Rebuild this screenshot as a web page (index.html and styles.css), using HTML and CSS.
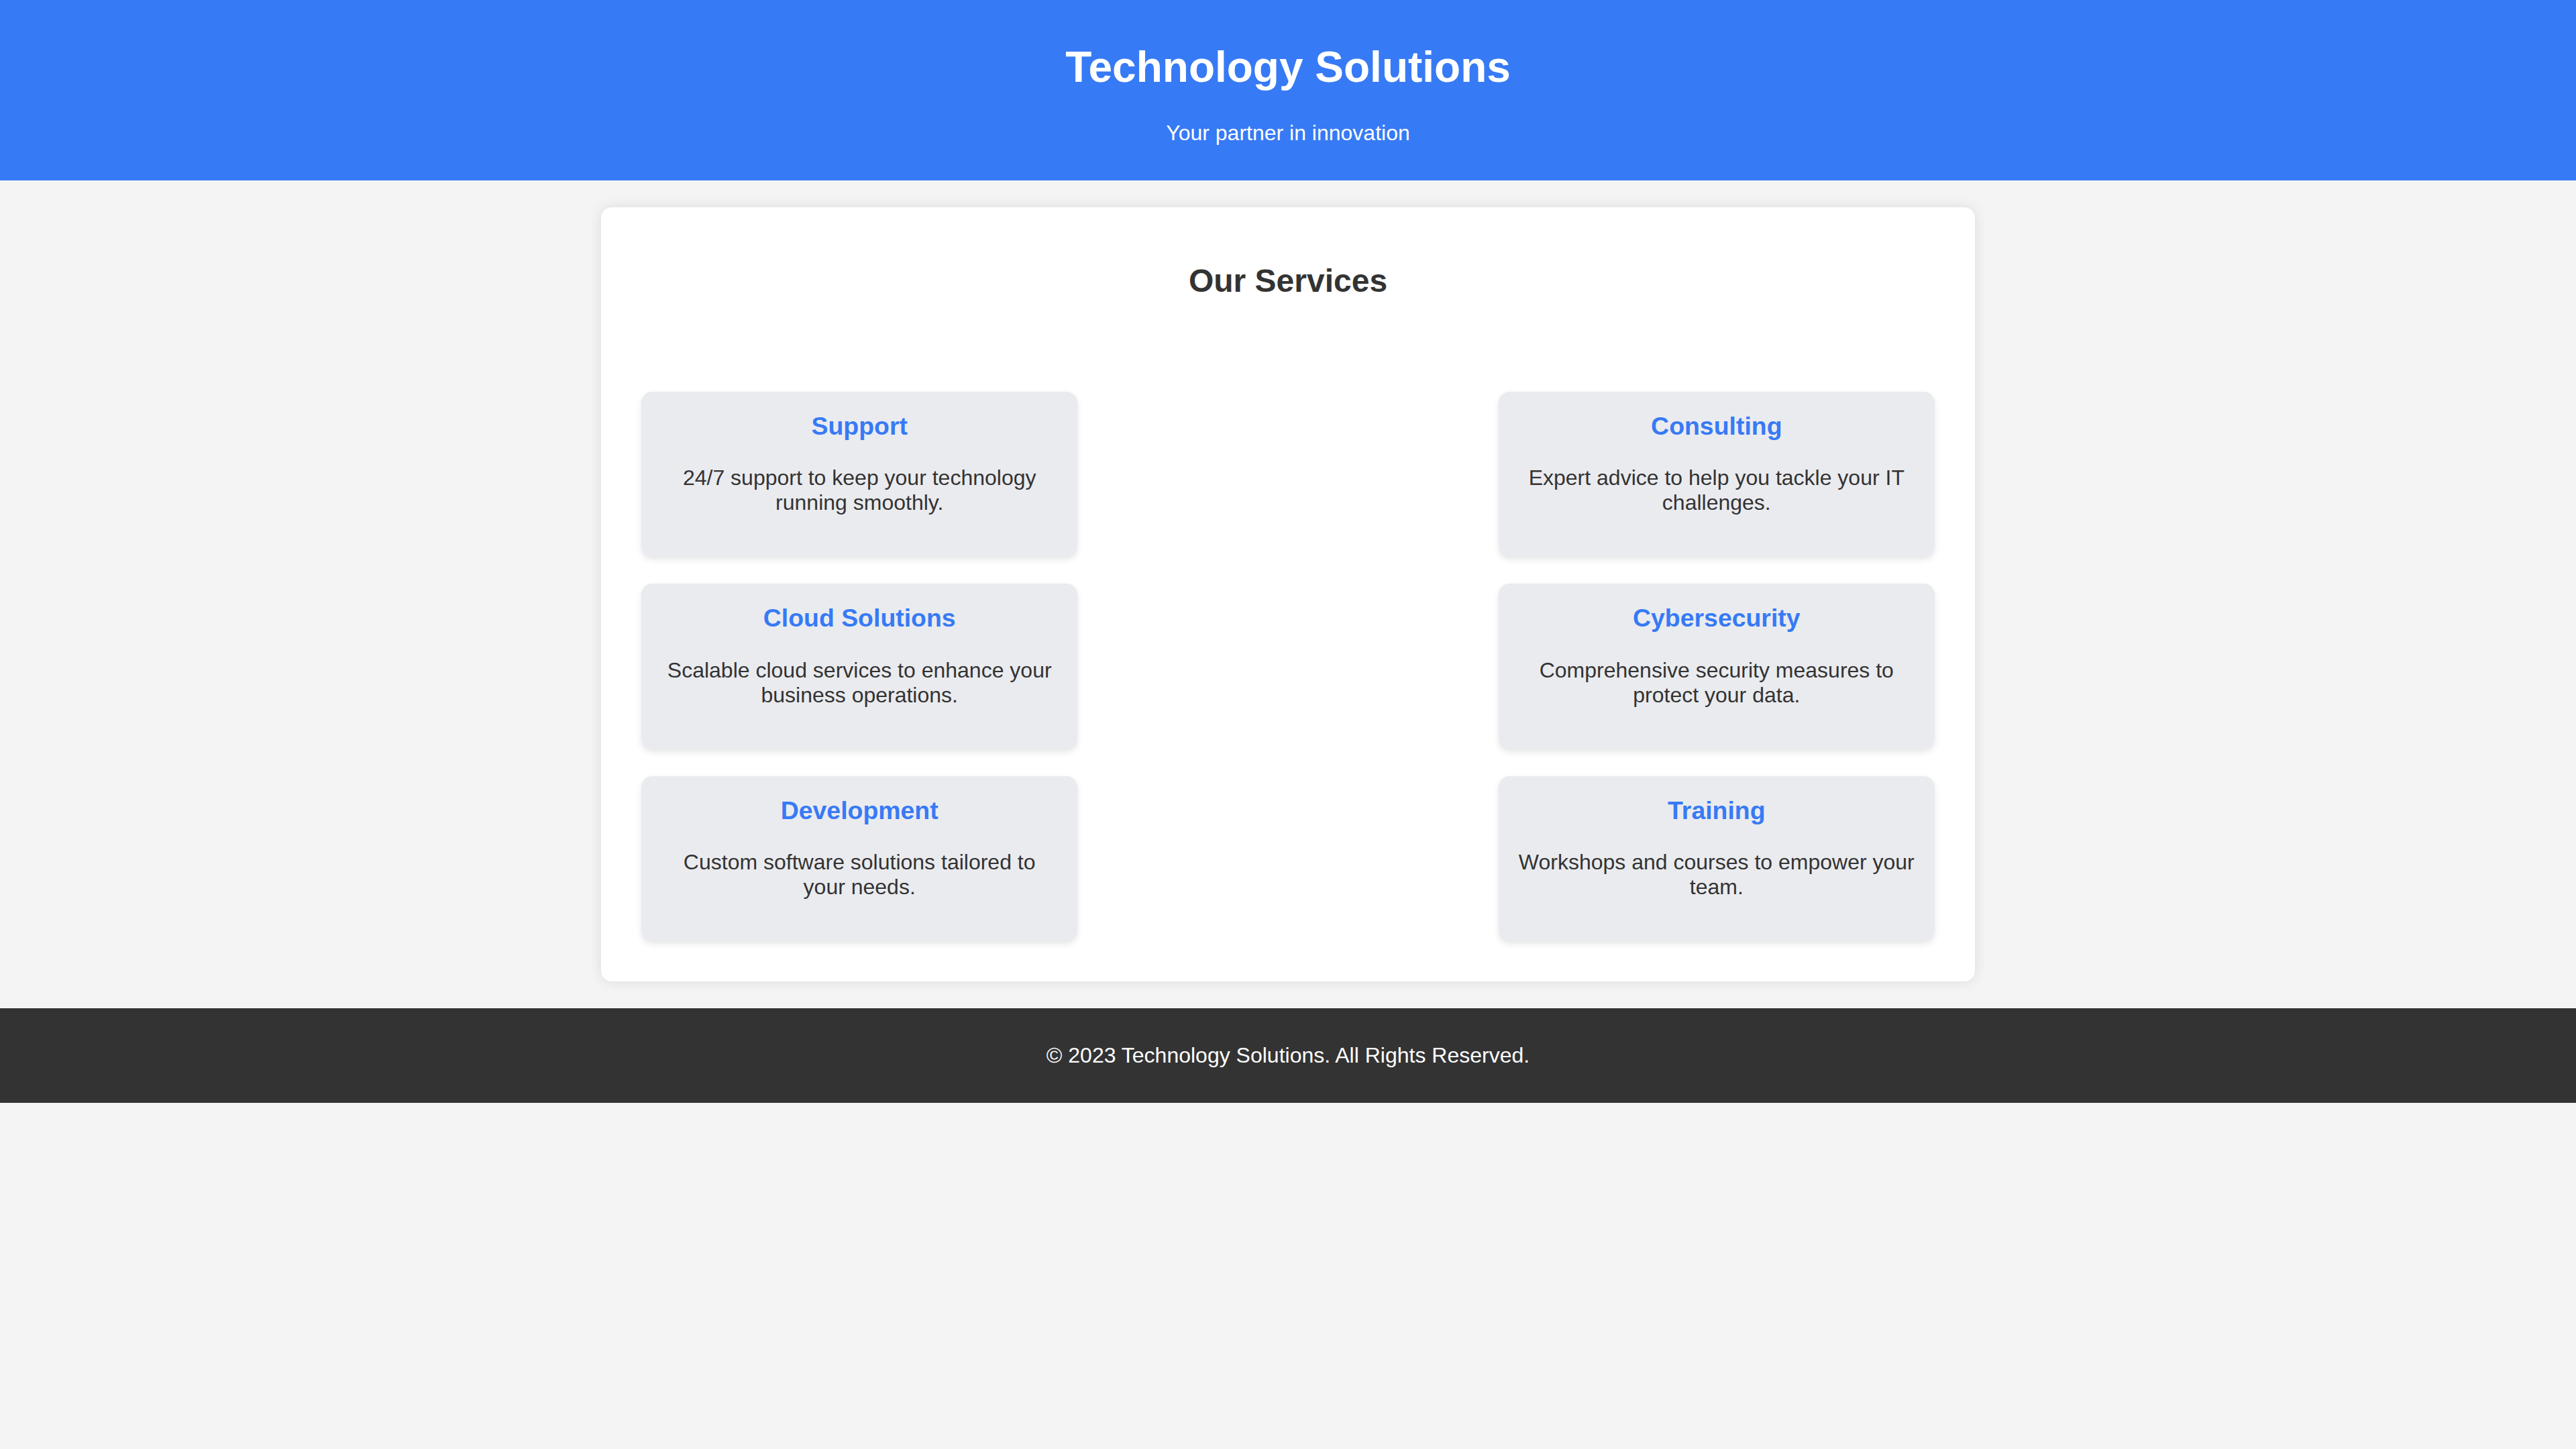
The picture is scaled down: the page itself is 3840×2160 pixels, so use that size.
FILE: index.html
```html
<!DOCTYPE html>
<html lang="en">
<head>
<meta charset="utf-8">
<title>Technology Solutions</title>
<link rel="stylesheet" href="styles.css">
</head>
<body class="page">
  <header class="site-header">
    <h1 class="site-title">Technology Solutions</h1>
    <p class="site-tagline">Your partner in innovation</p>
  </header>

  <main class="services">
    <h2 class="services-title">Our Services</h2>
    <div class="service-list">
      <div class="service-card">
        <h3 class="service-name">Support</h3>
        <p class="service-desc">24/7 support to keep your technology running smoothly.</p>
      </div>
      <div class="service-card">
        <h3 class="service-name">Consulting</h3>
        <p class="service-desc">Expert advice to help you tackle your IT challenges.</p>
      </div>
      <div class="service-card">
        <h3 class="service-name">Cloud Solutions</h3>
        <p class="service-desc">Scalable cloud services to enhance your business operations.</p>
      </div>
      <div class="service-card">
        <h3 class="service-name">Cybersecurity</h3>
        <p class="service-desc">Comprehensive security measures to protect your data.</p>
      </div>
      <div class="service-card">
        <h3 class="service-name">Development</h3>
        <p class="service-desc">Custom software solutions tailored to your needs.</p>
      </div>
      <div class="service-card">
        <h3 class="service-name">Training</h3>
        <p class="service-desc">Workshops and courses to empower your team.</p>
      </div>
    </div>
  </main>

  <footer class="site-footer">
    <p class="footer-text">&copy; 2023 Technology Solutions. All Rights Reserved.</p>
  </footer>
</body>
</html>
```

FILE: styles.css
```css
html {
  background: #f4f4f4;
}

.page {
  margin: 0;
  font-family: "Liberation Sans", Arial, sans-serif;
  font-size: 32px;
  color: #333333;
  background: #f4f4f4;
}

.site-header {
  background: #377af5;
  color: #ffffff;
  text-align: center;
  padding: 20px;
}

.site-title {
  font-size: 64px;
  font-weight: bold;
  margin: 42.88px 0;
}

.site-tagline {
  margin: 32px 0;
}

.services {
  display: block;
  box-sizing: border-box;
  width: 2048px;
  margin: 40px auto;
  padding: 40px;
  background: #ffffff;
  border-radius: 16px;
  box-shadow: 0 0 20px rgba(0, 0, 0, 0.1);
}

.services-title {
  font-size: 48px;
  font-weight: bold;
  text-align: center;
  margin: 42px 0 40px;
  color: #333333;
}

.service-list {
  display: flex;
  flex-wrap: wrap;
  justify-content: space-between;
  padding-top: 78px;
}

.service-card {
  width: 30%;
  margin: 20px;
  padding: 30px;
  background: #eaebef;
  border-radius: 16px;
  box-shadow: 0 4px 10px rgba(0, 0, 0, 0.1);
  text-align: center;
}

.service-name {
  font-size: 37.44px;
  font-weight: bold;
  color: #377af5;
  margin: 0 0 37.44px;
}

.service-desc {
  margin: 32px 0;
  line-height: normal;
}

.site-footer {
  background: #333333;
  color: #ffffff;
  text-align: center;
  padding: 20px;
}

.footer-text {
  margin: 32px 0;
}
```
